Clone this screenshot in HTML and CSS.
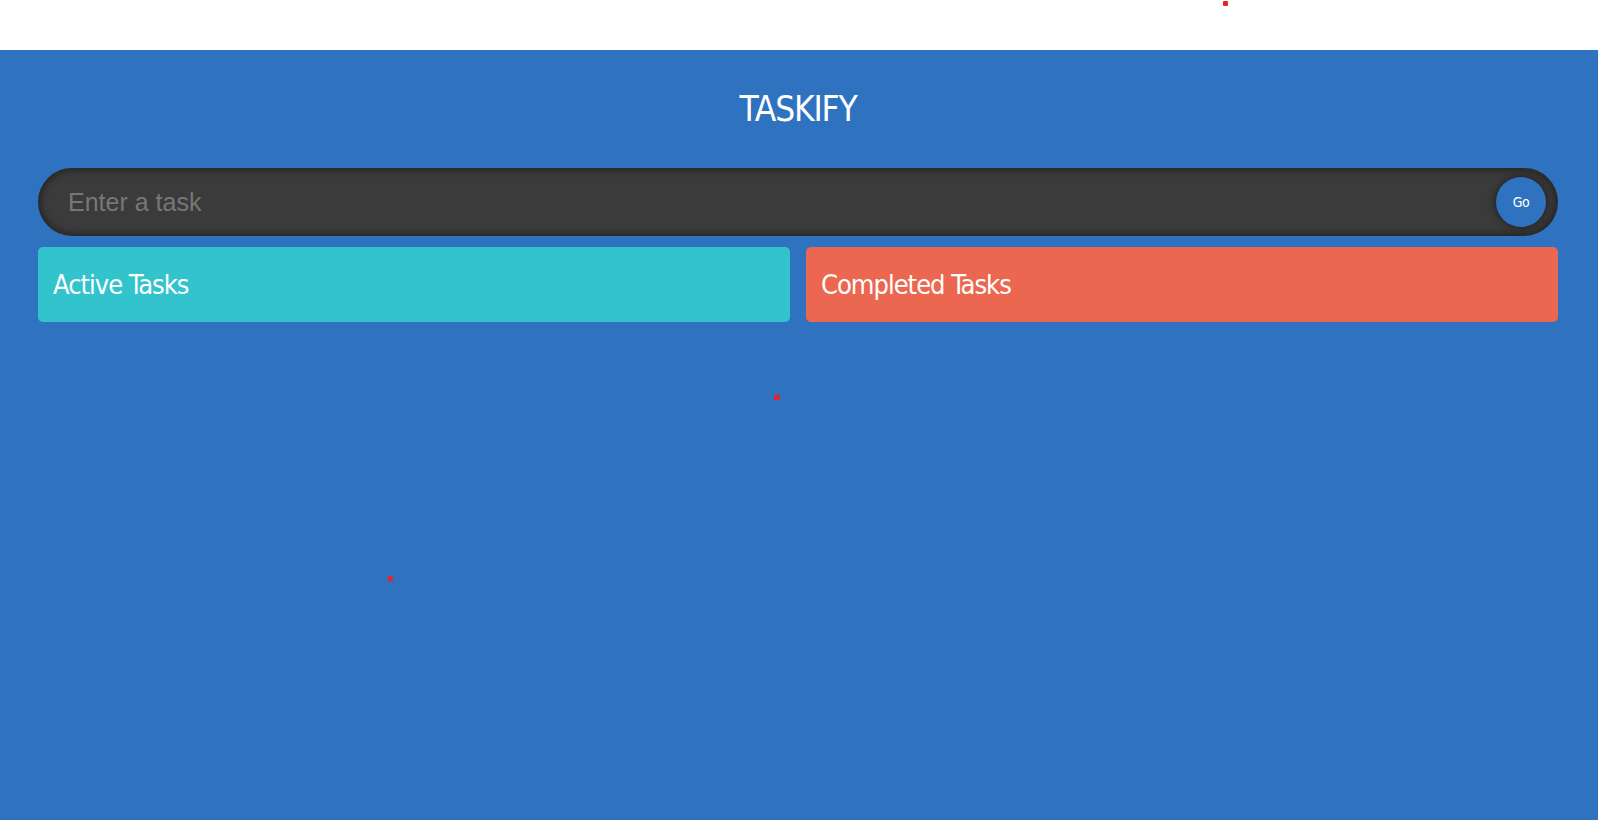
FILE: index.html
```html
<!DOCTYPE html>
<html lang="en">
<head>
  <meta charset="UTF-8">
  <meta name="viewport" content="width=device-width, initial-scale=1.0">
  <title>Taskify</title>
  <link rel="stylesheet" href="styles.css">
</head>
<body>

  <div class="topbar"></div>

  <!-- Main app area -->
  <div class="app">
    <h1 class="heading">TASKIFY</h1>

    <form class="input-form">
      <input type="text" class="input-box" placeholder="Enter a task">
      <button type="submit" class="input-submit">Go</button>
    </form>

    <div class="container">
      <div class="todos active">
        <span class="todos-heading">Active Tasks</span>
      </div>
      <div class="todos remove">
        <span class="todos-heading">Completed Tasks</span>
      </div>
    </div>
  </div>

  <!-- stray drag markers -->
  <span class="dot dot-1"></span>
  <span class="dot dot-2"></span>
  <span class="dot dot-3"></span>

</body>
</html>
```

FILE: styles.css
```css
* {
  margin: 0;
  padding: 0;
  box-sizing: border-box;
}

body {
  font-family: "DejaVu Sans Condensed", "Liberation Sans Narrow", sans-serif;
  background-color: #fff;
  height: 820px;
  overflow: hidden;
}

.topbar {
  height: 50px;
  background-color: #fff;
}

.app {
  height: 770px;
  background-color: #2f73c0;
  display: flex;
  flex-direction: column;
  align-items: center;
  padding: 0 40px 0 38px;
}

.heading {
  font-weight: 400;
  font-size: 35px;
  color: #fff;
  margin-top: 35px;
  height: 48px;
  line-height: 48px;
  letter-spacing: -1.2px;
}

.input-form {
  display: flex;
  align-items: center;
  width: 100%;
  margin-top: 35px;
  height: 68px;
  background-color: #3b3b3b;
  border: 2px solid #2b2b2b;
  border-radius: 50px;
  box-shadow: inset 0 0 6px #1f1f1f;
  padding: 0 10px 0 28px;
}

.input-box {
  flex: 1;
  background: transparent;
  border: none;
  outline: none;
  font-family: "Liberation Sans", Arial, sans-serif;
  font-size: 25px;
  color: #fff;
}

.input-box::placeholder {
  color: #777;
}

.input-submit {
  width: 50px;
  height: 50px;
  border-radius: 50%;
  border: none;
  background-color: #2f73c0;
  color: #fff;
  font-family: "DejaVu Sans Condensed", sans-serif;
  font-size: 14px;
  letter-spacing: -0.5px;
  box-shadow: 0 0 8px #1a1a1a;
  cursor: pointer;
}

.container {
  display: flex;
  gap: 16px;
  width: 100%;
  margin-top: 11px;
}

.todos {
  flex: 1;
  height: 75px;
  border-radius: 5px;
  padding: 0 15px;
  display: flex;
  align-items: center;
}

.active {
  background-color: #32c3cd;
}

.remove {
  background-color: #eb6750;
}

.todos-heading {
  font-size: 27px;
  color: #fff;
  letter-spacing: -1px;
}

.dot {
  position: absolute;
  width: 5px;
  height: 5px;
  border-radius: 1px;
  background-color: #e8222a;
}

.dot-1 {
  left: 1223px;
  top: 1px;
}

.dot-2 {
  left: 774px;
  top: 395px;
  width: 6px;
}

.dot-3 {
  left: 388px;
  top: 576px;
}
```
